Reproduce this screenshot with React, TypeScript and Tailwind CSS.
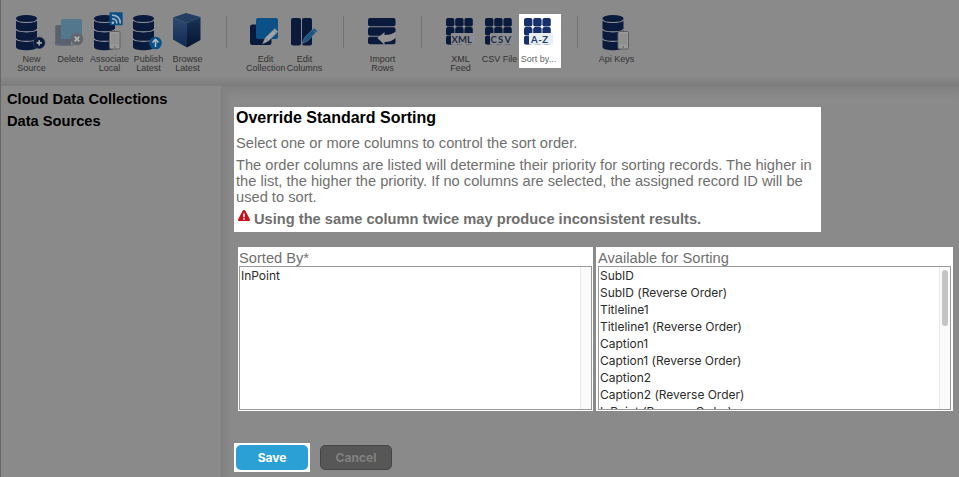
import React from "react";

const NAVY = "#0a1a3c";
const BLUE = "#0b5187";

function Database() {
  return (
    <g>
      <path d="M4 8.500V37C4 41.300 21.500 41.300 21.500 37V8.500Z" fill={NAVY} />
      <ellipse cx="12.750" cy="8.300" rx="8.750" ry="3.300" fill={NAVY} />
      <path
        d="M4 9C4.500 13 21 13 21.500 9M4 18.500C4.500 22.300 21 22.300 21.500 18.500M4 28C4.500 31.800 21 31.800 21.500 28"
        transform="translate(0 .5)"
        fill="none"
        stroke="#93969c"
        strokeWidth="1.100"
      />
    </g>
  );
}

function WideDatabase() {
  return (
    <g transform="translate(-0.800 0) scale(1.200 1)">
      <Database />
    </g>
  );
}

function Phone() {
  return (
    <g>
      <rect x="19.500" y="21.500" width="10.500" height="17.500" rx="1.200" fill="#9a9a9a" stroke="#5e5e5e" />
      <path d="M21 23.500h7.500v11H21z" fill="#909090" />
      <circle cx="24.800" cy="37" r="0.800" fill="#555" />
    </g>
  );
}

function NewIcon() {
  return (
    <>
      <WideDatabase />
      <circle cx="27.200" cy="32.800" r="5.900" fill={NAVY} stroke="#4e5565" strokeWidth="0.500" />
      <path d="M27.200 30.200v5.200M24.600 32.800h5.200" stroke="#aaa" strokeWidth="1.700" />
    </>
  );
}

function DeleteIcon() {
  return (
    <>
      <path d="M6.500 15H20v20.500H6.500Q4 35.500 4 33V17.500Q4 15 6.500 15z" fill="#59616f" />
      <path d="M9.500 15.500h-3Q4.500 15.500 4.500 18v14q0 3 3 3H23" stroke="#626a76" fill="none" />
      <path d="M12 9h17q2 0 2 2v18H10V11q0-2 2-2z" fill="#53778d" />
      <circle cx="26" cy="29" r="6.300" fill="#62666d" />
      <path d="M23.700 26.700l4.600 4.600M28.300 26.700l-4.600 4.600" stroke="#b2b2b2" strokeWidth="1.700" />
    </>
  );
}

function AssociateIcon() {
  return (
    <>
      <WideDatabase />
      <rect x="19.500" y="2.300" width="13.200" height="13" rx="1" fill={BLUE} />
      <path d="M22 8.800q4.800 0 4.800 4.800M22 5.300q8.300 0 8.300 8.300" stroke="#aab4bd" strokeWidth="1.500" fill="none" />
      <circle cx="22.900" cy="12.700" r="1.300" fill="#aab4bd" />
      <Phone />
    </>
  );
}

function PublishIcon() {
  return (
    <>
      <WideDatabase />
      <circle cx="26.500" cy="33" r="6.300" fill={BLUE} />
      <path d="M26.500 37v-7M23.500 32.500l3-3.200 3 3.200" stroke="#b5bdc4" strokeWidth="1.600" fill="none" />
    </>
  );
}

function BrowseIcon() {
  return (
    <>
      <defs>
        <linearGradient id="cubeLeft" x1="0" y1="0" x2="0" y2="1">
          <stop offset="0" stopColor="#304a70" />
          <stop offset="1" stopColor="#0e2a52" />
        </linearGradient>
        <linearGradient id="cubeRight" x1="0" y1="0" x2="0" y2="1">
          <stop offset="0" stopColor="#1a3358" />
          <stop offset="1" stopColor="#06142e" />
        </linearGradient>
      </defs>
      <path d="M5 7.500L18 3l14.500 4L19 13z" fill="#243e62" />
      <path d="M5 7.500L19 13v24.500L5 29.500z" fill="url(#cubeLeft)" />
      <path d="M19 13l13.500-6v23L19 37.500z" fill="url(#cubeRight)" />
    </>
  );
}

function EditCollectionIcon() {
  return (
    <>
      <rect x="4" y="14.500" width="21.500" height="20.500" rx="2.500" fill={NAVY} />
      <path d="M12 8h18q2 0 2 2v17q0 2-2 2H12q-2 0-2-2V10q0-2 2-2z" fill={BLUE} />
      <path d="M16.500 34l2.500-6L28.800 18.500l3.200 3.200L22.500 31z" fill="#a2a5a8" stroke="#72777d" strokeWidth="0.500" />
      <path d="M27.300 20.300l3 3M19.300 28l3 3" stroke="#66717d" strokeWidth="0.700" />
    </>
  );
}

function EditColumnsIcon() {
  return (
    <>
      <rect x="6" y="8" width="10" height="27.500" rx="2" fill={NAVY} />
      <rect x="17" y="8" width="10" height="27.500" rx="2" fill={NAVY} />
      <path d="M17 33.500l2.500-5.800L29 18l3.300 3-9.500 9.800z" fill="#1b5586" stroke="#73808b" strokeWidth="0.600" />
      <path d="M27.500 19.800l3.200 3" stroke="#8a8a8a" strokeWidth="0.700" />
    </>
  );
}

function ImportIcon() {
  return (
    <>
      <rect x="5" y="8" width="27.500" height="8.300" rx="2" fill={NAVY} />
      <rect x="5" y="17.300" width="27.500" height="8.400" rx="2" fill={NAVY} />
      <rect x="5" y="26.700" width="27.500" height="7.500" rx="2" fill={NAVY} />
      <path d="M32.800 21.500v6q-4 4.500-11.300 4.500v2.700L14.300 28l7.200-5.700V25q7 0 11.300-3.500z" fill="#939393" />
    </>
  );
}

function GridIcon({ text, bright }: { text: string; bright?: boolean }) {
  const fill = bright ? "#15306a" : NAVY;
  return (
    <>
      {[0, 1, 2].map((row) =>
        [0, 1, 2].map((col) => (
          <rect key={`${row}-${col}`} x={5 + col * 9.200} y={8 + row * 9.100} width="8.400" height="8.400" rx="2" fill={fill} />
        )),
      )}
      <rect x="10" y="23" width="24" height="11.500" rx="1" fill={bright ? "#e9eef5" : "#8c8d92"} />
      <text
        x={bright ? 12 : 10.500}
        y="32.500"
        textLength={bright ? 17 : 20.500}
        className="font-['Lato',sans-serif] text-[9.5px] font-bold"
        fill={bright ? "#253c6c" : "#1d2940"}
      >
        {text}
      </text>
      <path d="M5 27.500q0-1.500 1.500-1.500h3v8.200H7q-2 0-2-2z" fill={fill} />
    </>
  );
}

function ApiIcon() {
  return (
    <g transform="translate(1.500 0)">
      <WideDatabase />
      <Phone />
    </g>
  );
}

function Tool({ label, children, active }: { label: string; children: React.ReactNode; active?: boolean }) {
  return (
    <div className={active ? "-mr-[3px] h-[54px] w-[42px] shrink-0 bg-white text-[#666]" : "h-[62px] w-[39px] shrink-0 text-[#333]"}>
      <svg viewBox="0 4 39 36" className="block h-9 w-[39px] overflow-visible">{children}</svg>
      <div className="mt-[5px] w-[39px] overflow-hidden text-center text-[9px] leading-[9px] whitespace-pre">{label}</div>
    </div>
  );
}

function Separator() {
  return (
    <div className="flex w-[39px] shrink-0 justify-center">
      <div className="mt-[2px] h-8 w-px bg-[#737373]" />
    </div>
  );
}

const options = [
  "SubID",
  "SubID (Reverse Order)",
  "Titleline1",
  "Titleline1 (Reverse Order)",
  "Caption1",
  "Caption1 (Reverse Order)",
  "Caption2",
  "Caption2 (Reverse Order)",
  "InPoint (Reverse Order)",
];

function ListPanel({ title, items, scroll, className }: { title: string; items: string[]; scroll?: boolean; className: string }) {
  return (
    <section className={`h-[164px] shrink-0 bg-white pt-[3px] ${className}`}>
      <h3 className="h-4 text-[14.67px] leading-4 text-[#6f6f6f]">{title}</h3>
      <div className="flex h-[144px] border border-[#999] bg-white">
        <ul className="min-w-0 flex-1 overflow-hidden pl-px font-['Inter',sans-serif] text-[12px] leading-[17px] tracking-[-0.02px] text-[#2b2b2b]">
          {items.map((item) => (
            <li key={item} className="whitespace-nowrap">{item}</li>
          ))}
        </ul>
        <div className="w-[11px] border-l border-[#e8e8e8] bg-[#fafafa] pt-[3px] pl-[2px]">
          {scroll && <div className="h-14 w-[6px] rounded-full bg-[#c4c4c4]" />}
        </div>
      </div>
    </section>
  );
}

export default function App() {
  return (
    <div className="flex h-[477px] w-[959px] flex-col overflow-hidden border-l border-[#676767] bg-[#8a8a8a] font-['Liberation_Sans',Arial,sans-serif]">
      <header className="flex h-[86px] shrink-0 items-start bg-linear-to-b from-[#8a8a8a] from-88% to-[#7c7c7c] pt-[14px] pl-[11px]">
        <Tool label={"New\nSource"}><NewIcon /></Tool>
        <Tool label="Delete"><DeleteIcon /></Tool>
        <Tool label={"Associate\nLocal"}><AssociateIcon /></Tool>
        <Tool label={"Publish\nLatest"}><PublishIcon /></Tool>
        <Tool label={"Browse\nLatest"}><BrowseIcon /></Tool>
        <Separator />
        <Tool label={"Edit\nCollection"}><EditCollectionIcon /></Tool>
        <Tool label={"Edit\nColumns"}><EditColumnsIcon /></Tool>
        <Separator />
        <Tool label={"Import\nRows"}><ImportIcon /></Tool>
        <Separator />
        <Tool label={"XML\nFeed"}><GridIcon text="XML" /></Tool>
        <Tool label="CSV File"><GridIcon text="CSV" /></Tool>
        <Tool label="Sort by..." active><GridIcon text="A-Z" bright /></Tool>
        <Separator />
        <Tool label="Api Keys"><ApiIcon /></Tool>
      </header>
      <div className="flex min-h-0 flex-1">
        <nav className="w-[220px] shrink-0 pt-[2px] pl-[6px] text-[14.67px] leading-[22px] font-bold text-black">
          <p>Cloud Data Collections</p>
          <p>Data Sources</p>
        </nav>
        <main className="min-w-0 flex-1 border-t border-l border-[#7d7d7d] pt-5 pl-3 shadow-[inset_5px_6px_7px_rgba(0,0,0,0.06)]">
          <section className="h-[125px] w-[587px] bg-white pt-[1px] pl-[2px] text-[14.67px] leading-4 text-[#6f6f6f]">
            <h2 className="h-5 text-base leading-5 font-bold text-black">Override Standard Sorting</h2>
            <p className="mt-[7px]">Select one or more columns to control the sort order.</p>
            <p className="mt-[6px] whitespace-nowrap">
              The order columns are listed will determine their priority for sorting records. The higher in<br />
              the list, the higher the priority. If no columns are selected, the assigned record ID will be<br />
              used to sort.
            </p>
            <p className="mt-[6px] flex font-bold">
              <svg viewBox="0 0 12 11" className="-mt-px mr-1 ml-[2px] h-[11px] w-3">
                <path d="M6 0q1 0 1.500 1L12 9.500q0 1.500-1 1.500H1Q0 11 0 9.500L4.500 1Q5 0 6 0z" fill="#c51218" />
                <path d="M6 3.500v3.700M6 8.300v1.500" stroke="#fff" strokeWidth="1.500" />
              </svg>
              Using the same column twice may produce inconsistent results.
            </p>
          </section>
          <div className="mt-[15px] flex gap-[3px] pl-1">
            <ListPanel title="Sorted By*" items={["InPoint"]} className="w-[355px] pr-px pl-px" />
            <ListPanel title="Available for Sorting" items={options} scroll className="w-[357px] pr-[2px] pl-[2px]" />
          </div>
          <div className="mt-8 flex items-start gap-[10px] font-['Inter',sans-serif] text-[12px] font-bold">
            <div className="h-[29px] w-[76px] bg-white p-[2px]">
              <button className="h-[25px] w-full rounded-[5px] bg-[#2ba0d5] text-white">Save</button>
            </div>
            <button className="mt-[2px] h-[25px] w-[72px] rounded-[5px] border border-[#464646] bg-[#575757] text-[#818181]">Cancel</button>
          </div>
        </main>
      </div>
    </div>
  );
}
